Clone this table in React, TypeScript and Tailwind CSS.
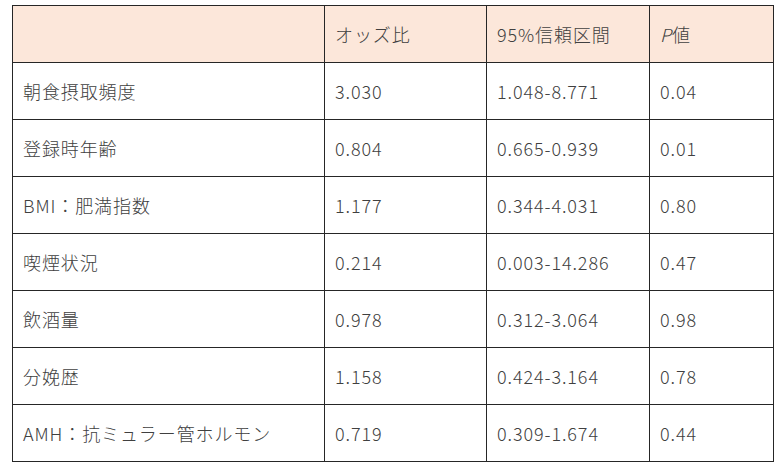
import React from "react"

type Row = {
    label: string
    odds: string
    ci: string
    p: string
}

const rows: Row[] = [
    { label: "朝食摂取頻度", odds: "3.030", ci: "1.048-8.771", p: "0.04" },
    { label: "登録時年齢", odds: "0.804", ci: "0.665-0.939", p: "0.01" },
    { label: "BMI：肥満指数", odds: "1.177", ci: "0.344-4.031", p: "0.80" },
    { label: "喫煙状況", odds: "0.214", ci: "0.003-14.286", p: "0.47" },
    { label: "飲酒量", odds: "0.978", ci: "0.312-3.064", p: "0.98" },
    { label: "分娩歴", odds: "1.158", ci: "0.424-3.164", p: "0.78" },
    { label: "AMH：抗ミュラー管ホルモン", odds: "0.719", ci: "0.309-1.674", p: "0.44" },
]

const cell = "border border-[#262626] h-[57px] pl-[10px] align-middle text-left font-light"

const App: React.FC = () => {
    return (
        <div className="w-[780px] h-[471px] bg-white pt-[5px] pl-[12px] font-['Noto_Sans_CJK_JP','Noto_Sans',sans-serif] text-[18px] tracking-[0.05em] text-[#404040]">
            <table className="border-collapse table-fixed w-[761px]">
                <colgroup>
                    <col className="w-[312px]" />
                    <col className="w-[162px]" />
                    <col className="w-[163px]" />
                    <col className="w-[124px]" />
                </colgroup>
                <thead>
                    <tr className="bg-[#fce7da]">
                        <th className={cell}></th>
                        <th className={cell}>オッズ比</th>
                        <th className={cell}>95%信頼区間</th>
                        <th className={cell}>
                            <span className="italic">P</span>値
                        </th>
                    </tr>
                </thead>
                <tbody>
                    {rows.map((r) => (
                        <tr key={r.label}>
                            <td className={cell}>{r.label}</td>
                            <td className={cell}>{r.odds}</td>
                            <td className={cell}>{r.ci}</td>
                            <td className={cell}>{r.p}</td>
                        </tr>
                    ))}
                </tbody>
            </table>
        </div>
    )
}

export default App
